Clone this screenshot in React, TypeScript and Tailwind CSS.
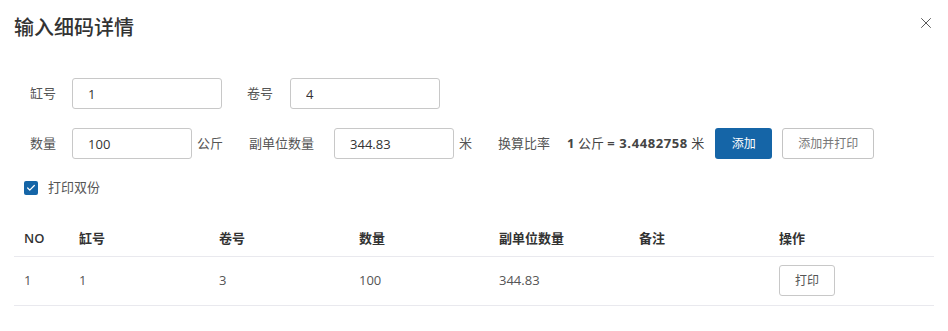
import { Check, X } from 'lucide-react';

const columns = [
  { key: 'no', title: 'NO', width: 'w-[55px]' },
  { key: 'vat', title: '缸号', width: 'w-[140px]' },
  { key: 'roll', title: '卷号', width: 'w-[140px]' },
  { key: 'qty', title: '数量', width: 'w-[140px]' },
  { key: 'sub', title: '副单位数量', width: 'w-[140px]' },
  { key: 'remark', title: '备注', width: 'w-[140px]' },
  { key: 'action', title: '操作', width: 'flex-1' },
];

const rows = [{ no: '1', vat: '1', roll: '3', qty: '100', sub: '344.83', remark: '' }];

function Field({ value, width }: { value: string; width: string }) {
  return (
    <input
      readOnly
      value={value}
      className={`${width} h-[31px] rounded-[3px] border border-[#c8c8c8] bg-white px-[15px] text-[13px] text-[#333] outline-none`}
    />
  );
}

export default function App() {
  return (
    <div
      className="w-[948px] h-[331px] bg-white text-[13px] text-[#555]"
      style={{ fontFamily: '"Open Sans", "Noto Sans CJK SC", sans-serif' }}
    >
      <div className="flex items-start justify-between pl-[14px] pr-[13px] pt-[13px]">
        <h2 className="text-[20px] leading-[30px] font-medium text-[#333]">输入细码详情</h2>
        <button className="mt-[1px] text-[#555]" aria-label="close">
          <X className="h-[18px] w-[18px]" strokeWidth={1.3} />
        </button>
      </div>

      <div className="px-[14px]">
        <div className="mt-[35px] flex items-center">
          <span className="ml-[16px] mr-[16px]">缸号</span>
          <Field value="1" width="w-[150px]" />
          <span className="ml-[25px] mr-[17px]">卷号</span>
          <Field value="4" width="w-[150px]" />
        </div>

        <div className="mt-[19px] flex items-center">
          <span className="ml-[16px] mr-[16px]">数量</span>
          <Field value="100" width="w-[120px]" />
          <span className="ml-[5px]">公斤</span>
          <span className="ml-[26px] mr-[20px]">副单位数量</span>
          <Field value="344.83" width="w-[120px]" />
          <span className="ml-[5px]">米</span>
          <span className="ml-[26px]">换算比率</span>
          <span className="ml-[17px] text-[#444]">
            <b className="font-bold">1</b> 公斤 <b className="font-bold tracking-[0.6px]">= 3.4482758</b> 米
          </span>
          <button className="ml-[11px] h-[31px] w-[57px] rounded-[3px] bg-[#1565a7] text-[12px] text-white">
            添加
          </button>
          <button className="ml-[10px] h-[31px] w-[92px] rounded-[3px] border border-[#c4c4c4] bg-white text-[12px] text-[#777]">
            添加并打印
          </button>
        </div>

        <label className="mt-[19px] flex items-center">
          <span className="ml-[10px] flex h-[14px] w-[14px] items-center justify-center rounded-[2px] bg-[#1565a7]">
            <Check className="h-[10px] w-[10px] text-white" strokeWidth={3} />
          </span>
          <span className="ml-[10px]">打印双份</span>
        </label>

        <div className="mt-[24px] w-[920px]">
          <div className="flex h-[35px] items-center border-b border-[#e9e9ee] font-semibold text-[#333]">
            {columns.map((c) => (
              <div key={c.key} className={`${c.width} px-[10px]`}>
                {c.title}
              </div>
            ))}
          </div>
          {rows.map((r) => (
            <div key={r.no} className="flex h-[49px] items-center border-b border-[#e9e9ee] text-[#555]">
              <div className="w-[55px] px-[10px]">{r.no}</div>
              <div className="w-[140px] px-[10px]">{r.vat}</div>
              <div className="w-[140px] px-[10px]">{r.roll}</div>
              <div className="w-[140px] px-[10px]">{r.qty}</div>
              <div className="w-[140px] px-[10px]">{r.sub}</div>
              <div className="w-[140px] px-[10px]">{r.remark}</div>
              <div className="flex-1 px-[10px]">
                <button className="h-[31px] w-[56px] rounded-[3px] border border-[#c8c8c8] bg-white text-[12px] text-[#555]">
                  打印
                </button>
              </div>
            </div>
          ))}
        </div>
      </div>
    </div>
  );
}
